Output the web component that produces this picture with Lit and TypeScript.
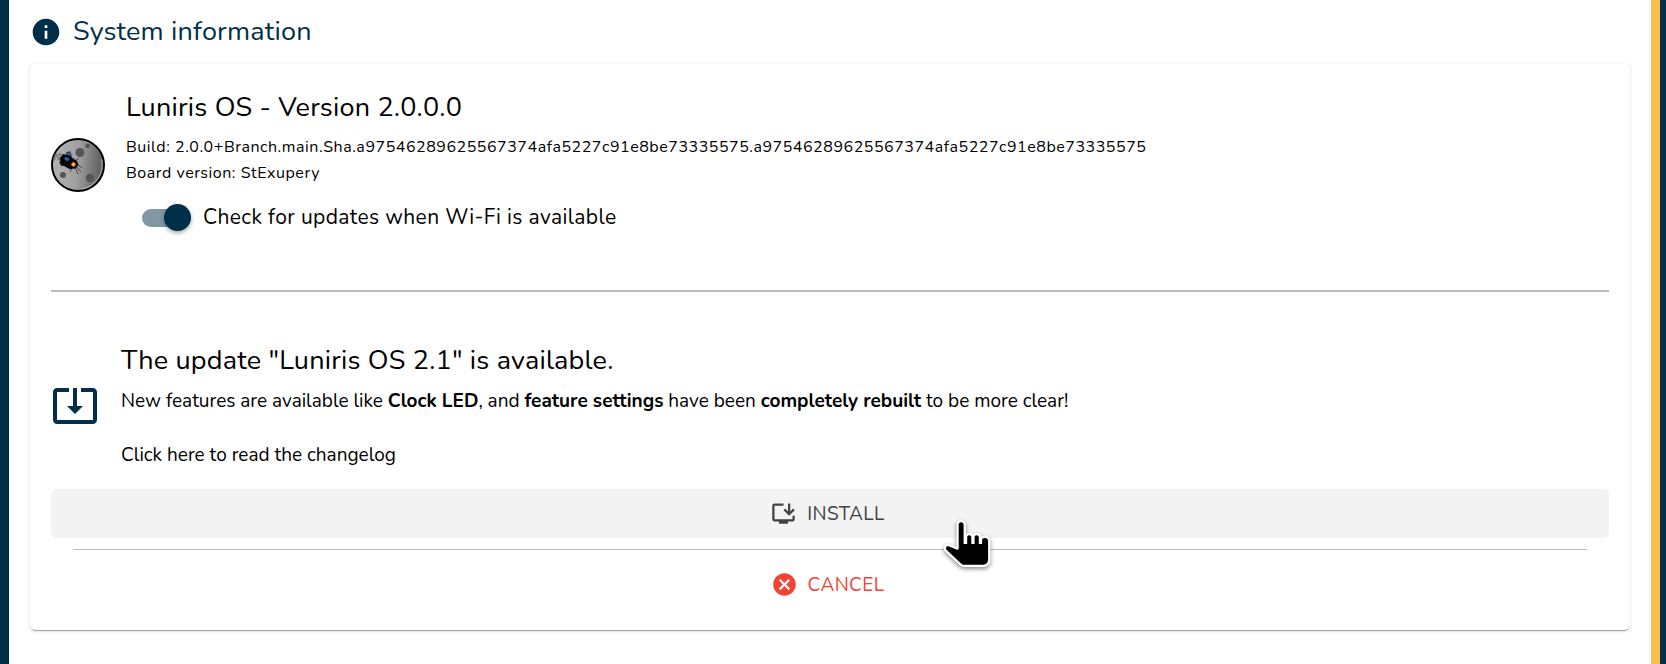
import { LitElement, html, css, svg } from "lit";
import { customElement, state } from "lit/decorators.js";

const infoIcon = svg`<path d="M12 2C6.48 2 2 6.48 2 12s4.48 10 10 10 10-4.48 10-10S17.52 2 12 2zm1 15h-2v-6h2v6zm0-8h-2V7h2v2z"/>`;
const updateIcon = svg`<path d="M12 16.5l4-4h-3v-9h-2v9H8l4 4zm9-13h-6v1.99h6v14.03H3V5.49h6V3.5H3c-1.1 0-2 .9-2 2v14c0 1.1.9 2 2 2h18c1.1 0 2-.9 2-2v-14c0-1.1-.9-2-2-2z"/>`;
const installIcon = svg`<path d="M20 17H4V5h8V3H4c-1.11 0-2 .89-2 2v12c0 1.1.89 2 2 2h4v2h8v-2h4c1.1 0 2-.9 2-2v-3h-2v3z"/><path d="M17 14l5-5-1.41-1.41L18 10.17V3h-2v7.17l-2.59-2.58L12 9l5 5z"/>`;
const cancelIcon = svg`<path d="M12 2C6.47 2 2 6.47 2 12s4.47 10 10 10 10-4.47 10-10S17.53 2 12 2zm5 13.59L15.59 17 12 13.41 8.41 17 7 15.59 10.59 12 7 8.41 8.41 7 12 10.59 15.59 7 17 8.41 13.41 12 17 15.59z"/>`;

@customElement("app-root")
export class AppRoot extends LitElement {
  @state() private autoCheck = true;

  static styles = css`
    :host {
      --navy: #003049;
      --amber: #fcbf49;
      display: block;
      box-sizing: border-box;
      min-height: 100vh;
      padding: 0 6px 0 9px;
      background: var(--navy);
      color: #000;
      font-family: "Nunito", "Open Sans", sans-serif;
    }
    * {
      box-sizing: border-box;
    }
    svg {
      display: block;
      flex: none;
      fill: currentColor;
    }
    .page {
      min-height: 100vh;
      padding: 11px 21px 32px;
      background: #fff;
      border-right: 9px solid var(--amber);
    }
    .heading {
      display: flex;
      align-items: center;
      gap: 11px;
      color: var(--navy);
    }
    h1,
    h2 {
      margin: 0;
      font-size: 27px;
      font-weight: 400;
      line-height: 42px;
      letter-spacing: 0.0075em;
    }
    p {
      margin: 0;
    }
    .card {
      margin-top: 11px;
      padding: 23px 21px 21px;
      border-radius: 5px;
      background: #fff;
      box-shadow:
        0 3px 1px -2px rgba(0, 0, 0, 0.2),
        0 1px 1px rgba(0, 0, 0, 0.14),
        0 1px 4px rgba(0, 0, 0, 0.12);
    }
    .row {
      display: flex;
      align-items: center;
      gap: 21px;
    }
    .update {
      gap: 22px;
    }
    .version {
      padding-bottom: 11px;
    }
    .build {
      margin-top: 5px;
      font-size: 16px;
      line-height: 26px;
      letter-spacing: 0.0333em;
      overflow-wrap: anywhere;
    }
    .switch {
      display: flex;
      align-items: center;
      gap: 12px;
      width: fit-content;
      margin: 18px 0 0 16px;
      font-size: 21px;
      line-height: 27px;
      letter-spacing: 0.0178em;
      cursor: pointer;
    }
    .switch input {
      appearance: none;
      display: flex;
      align-items: center;
      flex: none;
      width: 49px;
      height: 27px;
      margin: 0;
      cursor: pointer;
    }
    .switch input::before {
      content: "";
      flex: none;
      width: 49px;
      height: 18px;
      border-radius: 9px;
      background: #9e9e9e;
    }
    .switch input::after {
      content: "";
      flex: none;
      width: 27px;
      height: 27px;
      margin-left: -49px;
      border-radius: 50%;
      background: #fff;
      box-shadow: 0 2px 4px rgba(0, 0, 0, 0.35);
    }
    .switch input:checked::before {
      background: #8098a4;
    }
    .switch input:checked::after {
      margin-left: -27px;
      background: var(--navy);
    }
    hr {
      margin: 0;
      border: 0;
      background: #bdbdbd;
    }
    .divider {
      height: 2px;
      margin: 48px 0;
    }
    .divider.thin {
      height: 1px;
      margin: 11px 22px 10px;
    }
    .update-icon {
      color: var(--navy);
    }
    .notes {
      margin-top: 6px;
      font-size: 19px;
      line-height: 27px;
    }
    .changelog {
      display: inline-block;
      margin-top: 27px;
      color: inherit;
      text-decoration: none;
    }
    b {
      font-weight: 700;
    }
    .action {
      display: flex;
      align-items: center;
      justify-content: center;
      gap: 10px;
      width: 100%;
      height: 49px;
      padding: 0 5px 0 0;
      border: 0;
      border-radius: 5px;
      background: transparent;
      font: inherit;
      font-size: 19px;
      letter-spacing: 0.02em;
      text-transform: uppercase;
      cursor: pointer;
    }
    .install {
      position: relative;
      margin-top: 20px;
      background: #f3f3f3;
      color: #424242;
    }
    .cancel {
      color: #f44336;
    }
    .pointer {
      position: absolute;
      left: calc(50% + 112px);
      top: 30px;
      z-index: 1;
      pointer-events: none;
      overflow: visible;
      filter: drop-shadow(0 2px 2px rgba(0, 0, 0, 0.45));
    }
  `;

  private icon(size: number, shape: unknown, cls = "") {
    return html`<svg class=${cls} width=${size} height=${size} viewBox="0 0 24 24" aria-hidden="true">${shape}</svg>`;
  }

  private moon() {
    return html`<svg width="54" height="54" viewBox="0 0 54 54" role="img" aria-label="Moon">
      <defs>
        <linearGradient id="moon" x1="0" x2="1" y1="0.4" y2="0.5">
          <stop offset="0" stop-color="#b4b4b4" />
          <stop offset="0.5" stop-color="#a0a0a0" />
          <stop offset="0.85" stop-color="#6c6c6c" />
          <stop offset="1" stop-color="#5c5c5c" />
        </linearGradient>
      </defs>
      <circle cx="27" cy="27" r="26" fill="url(#moon)" stroke="#000" stroke-width="2" />
      <path d="M50.5 21A24.500 24.500 0 0 1 31 51" fill="none" stroke="#c8c8c8" stroke-width="0.800" />
      <circle cx="29" cy="14.500" r="4.500" fill="#555" />
      <circle cx="36.500" cy="8" r="2.300" fill="#555" />
      <circle cx="12" cy="37" r="3" fill="#555" />
      <circle cx="39" cy="40" r="4.200" fill="#555" />
      <g fill="#777" opacity="0.8">
        <circle cx="5" cy="17.500" r="2" /><circle cx="9" cy="16.500" r="1.700" />
        <circle cx="3.500" cy="20.500" r="1.500" /><circle cx="8" cy="20.500" r="2" />
      </g>
      <path d="M24 23l4-3M26 26l5 4M24 29l3 7M21 30l-2 4M25 28l5 6" stroke="#333" stroke-width="0.800" fill="none" />
      <path d="M15 15l4-1.500 1.500 5-3 .5zM8.500 24l5-1 1.500 3.500-4.500 1.500z" fill="#2f5aa8" stroke="#111" stroke-width="0.600" />
      <path d="M9 20l3-4 6 1.500 8 5.500 1.500 4-3 3.500-6 .5-9-5z" fill="#050505" />
      <path d="M13 20l3-1 2.500 2-1.500 2-2.500-.5z" fill="#2f62b5" />
      <circle cx="22.500" cy="26.500" r="2.200" fill="#ff8a1c" />
      <circle cx="22.300" cy="26.300" r="0.900" fill="#ffd27a" />
    </svg>`;
  }

  render() {
    return html`
      <main class="page">
        <header class="heading">
          ${this.icon(32, infoIcon)}
          <h1>System information</h1>
        </header>
        <section class="card">
          <div class="row">
            ${this.moon()}
            <div class="version">
              <h2>Luniris OS - Version 2.0.0.0</h2>
              <div class="build">
                <p>Build: 2.0.0+Branch.main.Sha.a97546289625567374afa5227c91e8be73335575.a97546289625567374afa5227c91e8be73335575</p>
                <p>Board version: StExupery</p>
              </div>
              <label class="switch">
                <input
                  type="checkbox"
                  role="switch"
                  .checked=${this.autoCheck}
                  @change=${(e: Event) => (this.autoCheck = (e.target as HTMLInputElement).checked)}
                />
                <span>Check for updates when Wi-Fi is available</span>
              </label>
            </div>
          </div>
          <hr class="divider" />
          <div class="row update">
            ${this.icon(48, updateIcon, "update-icon")}
            <div>
              <h2>The update "Luniris OS 2.1" is available.</h2>
              <div class="notes">
                <p>New features are available like <b>Clock LED</b>, and <b>feature settings</b> have been <b>completely rebuilt</b> to be more clear!</p>
                <a class="changelog" href="#changelog">Click here to read the changelog</a>
              </div>
            </div>
          </div>
          <button class="action install" type="button">
            ${this.icon(27, installIcon)}<span>Install</span>
            <svg class="pointer" width="52" height="54" viewBox="0 0 52 54" aria-hidden="true">
              <path
                d="M19.100 3.300c1.500 0 2.500 1 2.500 2.500V25h3.600v-6.600c0-1.300.8-2.100 2-2.100s2.100.8 2.100 2.100V25h3.300v-6.600c0-1.300.8-2.100 2.100-2.100s2.100.8 2.100 2.100V25h3.300v-3.800c0-1.400.9-2.200 2.600-2.200 2.200 0 3.400 1 3.400 3v18.500c0 3.200-1.800 5.200-5 5.200H23c-2 0-3.300-.5-4.500-1.800L4.800 31c-1.600-1.900-.6-4 1.700-3.800l8 3.300c1.400.5 2.200-.1 2.200-1.500V5.800c0-1.500.9-2.500 2.400-2.500z"
                fill="#000" stroke="#fff" stroke-width="4.500" stroke-linejoin="round" paint-order="stroke"
              />
            </svg>
          </button>
          <hr class="divider thin" />
          <button class="action cancel" type="button">
            ${this.icon(27, cancelIcon)}<span>Cancel</span>
          </button>
        </section>
      </main>
    `;
  }
}
